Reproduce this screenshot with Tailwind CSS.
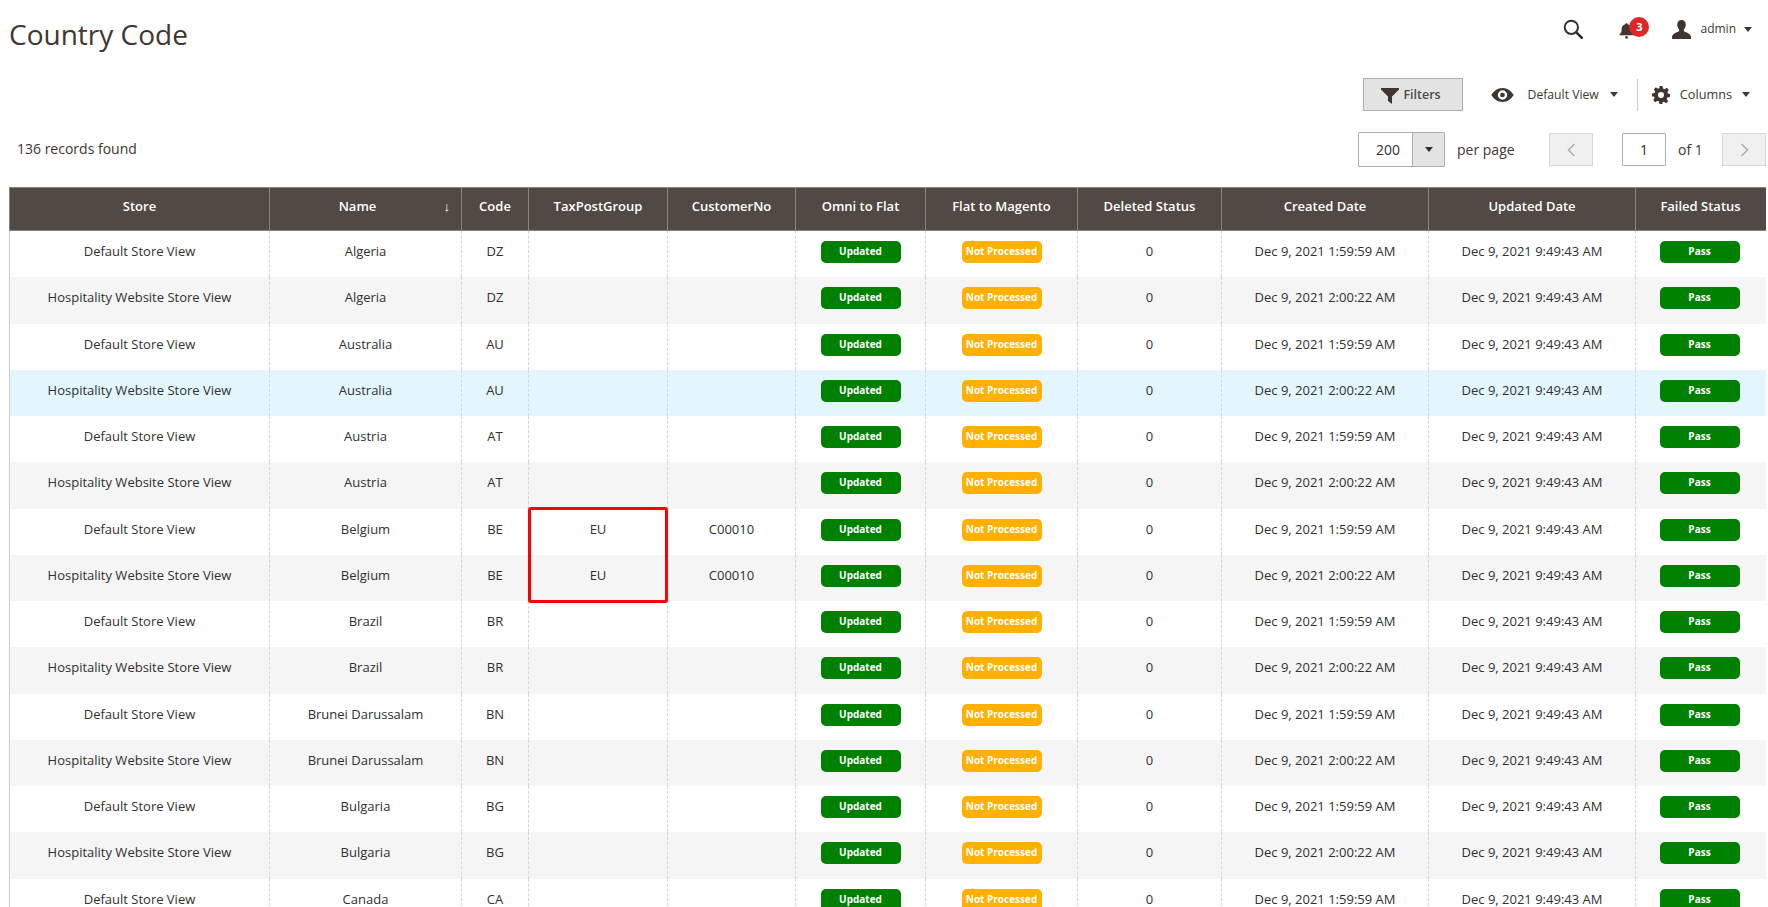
<!DOCTYPE html>
<html lang="en">
<head>
    <meta charset="UTF-8">
    <meta name="viewport" content="width=device-width, initial-scale=1.0">
    <title>Country Code</title>
    <script src="https://cdn.jsdelivr.net/npm/@tailwindcss/browser@4"></script>
</head>
<body class="bg-white font-['Open_Sans',sans-serif] text-[#303030]">
    <div class="h-[907px] overflow-hidden pl-[9px]">
        <!-- Page header -->
        <div class="flex items-start justify-between h-[78px]">
            <h1 class="text-[28px] leading-[36px] font-normal text-[#41362f] mt-[16px]">Country Code</h1>
            <div class="flex items-center h-[24px] mt-[17px] mr-[16px]">
                <svg class="w-[20px] h-[20px] text-[#303030]" viewBox="0 0 24 24" fill="none" stroke="currentColor">
                    <circle cx="10" cy="10" r="8" stroke-width="2.4"></circle>
                    <path d="M16 16L22.500 22.500" stroke-width="3" stroke-linecap="round"></path>
                </svg>
                <div class="relative ml-[35px] w-[24px] h-[24px]">
                    <svg class="absolute left-0 top-[5px] w-[17px] h-[17px] text-[#41362f]" viewBox="0 0 18 18" fill="currentColor">
                        <path d="M9 1.2c-.8 0-1.3.5-1.4 1.2C5 3.1 3.8 5.3 3.8 8c0 2.6-.8 3.9-2.3 5.3V14h15v-.7C15 11.900 14.200 10.600 14.200 8c0-2.700-1.200-4.900-3.800-5.600C10.300 1.700 9.800 1.200 9 1.200z"></path>
                        <circle cx="9" cy="16.300" r="1.400"></circle>
                    </svg>
                    <span class="absolute left-[11px] top-0 w-[20px] h-[20px] rounded-full bg-[#e22626] text-white text-[11px] leading-[19px] font-bold text-center">3</span>
                </div>
                <svg class="ml-[30px] w-[19px] h-[19px] text-[#41362f]" viewBox="0 0 20 20" fill="currentColor">
                    <path d="M10 0c-2.800 0-4.500 1.900-4.500 4.800 0 1.900.7 3.700 1.800 4.900.3.400.3 1.500.1 2C6.800 13.200 1 13.500 0 17.500V20h20v-2.500c-1-4-6.800-4.300-7.400-5.800-.2-.5-.2-1.600.1-2 1.100-1.200 1.800-3 1.800-4.900C14.500 1.900 12.800 0 10 0z"></path>
                </svg>
                <span class="ml-[9px] text-[12px] text-[#41362f]">admin</span>
                <span class="ml-[8px] w-0 h-0 border-x-[4px] border-x-transparent border-t-[5px] border-t-[#41362f]"></span>
            </div>
        </div>

        <!-- Toolbar -->
        <div class="flex items-center justify-end h-[33px] pr-[18px]">
            <button class="flex items-center justify-center w-[100px] h-[33px] pt-[2px] pr-[3px] bg-[#e3e3e3] border border-[#adadad] text-[12.5px] font-semibold text-[#514943]">
                <svg class="w-[18px] h-[16px] mr-[4px] text-[#41362f]" viewBox="0 0 18 16" fill="currentColor"><path d="M0 0h18v1.500L11 8.500V16l-4-3V8.500L0 1.500z"></path></svg>
                Filters
            </button>
            <svg class="ml-[28px] w-[23px] h-[14px] text-[#41362f]" viewBox="0 0 24 15" fill="currentColor">
                <path fill-rule="evenodd" d="M12 0C6.500 0 2.500 3.500 0 7.500 2.500 11.500 6.500 15 12 15s9.500-3.500 12-7.500C21.500 3.500 17.500 0 12 0zm0 2.500a5 5 0 1 1 0 10 5 5 0 0 1 0-10zm0 2.500a2.500 2.500 0 1 0 0 5 2.500 2.500 0 0 0 0-5z"></path>
            </svg>
            <span class="ml-[14px] pt-[2px] text-[12.2px] text-[#41362f]">Default View</span>
            <span class="ml-[11px] w-0 h-0 border-x-[4px] border-x-transparent border-t-[5px] border-t-[#41362f]"></span>
            <span class="ml-[19px] w-px h-[32px] bg-[#cccccc]"></span>
            <svg class="ml-[14px] w-[18px] h-[18px] text-[#41362f]" viewBox="0 0 24 24" fill="currentColor">
                <path fill-rule="evenodd" d="M10 0h4l.7 3.400 2 .8L19.600 2.300l2.800 2.800-1.900 2.900.8 2L24 10.700v3.900l-3.500.7-.8 2 1.900 2.900-2.800 2.800-2.900-1.900-2 .8L13.900 24H10l-.7-3.500-2-.8-2.900 1.900-2.800-2.800 1.900-2.900-.8-2L0 14v-4l3.500-.7.8-2L2.400 4.400l2.800-2.800 2.900 1.900 2-.8zM12 8a4 4 0 1 0 0 8 4 4 0 0 0 0-8z"></path>
            </svg>
            <span class="ml-[10px] pt-[1px] text-[12.7px] text-[#41362f]">Columns</span>
            <span class="ml-[10px] w-0 h-0 border-x-[4px] border-x-transparent border-t-[5px] border-t-[#41362f]"></span>
        </div>

        <!-- Records and pager -->
        <div class="flex items-center justify-between h-[35px] mt-[21px] pr-[2px]">
            <div class="pl-[8px] mb-[2px] text-[14px] text-[#41362f]">136 records found</div>
            <div class="flex items-center">
                <div class="flex w-[87px] h-[35px] border border-[#adadad] rounded-[1px]">
                    <span class="w-[53px] pl-[17px] text-[14px] leading-[33px]">200</span>
                    <span class="flex-1 flex items-center justify-center bg-[#e3e3e3] border-l border-[#adadad]">
                        <span class="w-0 h-0 border-x-[4px] border-x-transparent border-t-[5px] border-t-[#303030]"></span>
                    </span>
                </div>
                <span class="ml-[12px] w-[57px] whitespace-nowrap text-[14px] text-[#41362f]">per page</span>
                <button class="ml-[35px] flex items-center justify-center w-[44px] h-[33px] bg-[#f0f0f0] border border-[#d6d6d6]">
                    <svg class="w-[9px] h-[14px] text-[#adadad]" viewBox="0 0 9 14" fill="none" stroke="currentColor" stroke-width="1.500"><path d="M7.500 1L1.500 7l6 6"></path></svg>
                </button>
                <span class="ml-[29px] w-[44px] h-[33px] border border-[#adadad] rounded-[1px] text-[14px] leading-[31px] text-center">1</span>
                <span class="ml-[12px] w-[22px] whitespace-nowrap text-[14px] text-[#41362f]">of 1</span>
                <button class="ml-[22px] flex items-center justify-center w-[44px] h-[33px] bg-[#f0f0f0] border border-[#d6d6d6]">
                    <svg class="w-[9px] h-[14px] text-[#adadad]" viewBox="0 0 9 14" fill="none" stroke="currentColor" stroke-width="1.500"><path d="M1.500 1l6 6-6 6"></path></svg>
                </button>
            </div>
        </div>

        <!-- Grid -->
        <div class="relative mt-[20px] w-[1757px]">
            <table class="table-fixed border-separate border-spacing-0 w-[1757px] text-[13px]">
                <colgroup>
                    <col class="w-[260px]"><col class="w-[192px]"><col class="w-[67px]"><col class="w-[139px]"><col class="w-[128px]"><col class="w-[130px]"><col class="w-[152px]"><col class="w-[144px]"><col class="w-[207px]"><col class="w-[207px]"><col class="w-[131px]">
                </colgroup>
                <thead>
                    <tr class="bg-[#514943] text-white text-[13px] font-semibold">
                        <th class="h-[44px] p-0 pb-[4px] border-y border-l border-[#8a837f] font-semibold">Store</th>
                        <th class="relative h-[44px] p-0 pr-[16px] pb-[4px] border-y border-l border-[#8a837f] font-semibold">Name<span class="absolute right-[11px] top-[10px] text-[13px] leading-[16px] font-normal">↓</span></th>
                        <th class="h-[44px] p-0 pb-[4px] border-y border-l border-[#8a837f] font-semibold">Code</th>
                        <th class="h-[44px] p-0 pb-[4px] border-y border-l border-[#8a837f] font-semibold">TaxPostGroup</th>
                        <th class="h-[44px] p-0 pb-[4px] border-y border-l border-[#8a837f] font-semibold">CustomerNo</th>
                        <th class="h-[44px] p-0 pb-[4px] border-y border-l border-[#8a837f] font-semibold">Omni to Flat</th>
                        <th class="h-[44px] p-0 pb-[4px] border-y border-l border-[#8a837f] font-semibold">Flat to Magento</th>
                        <th class="h-[44px] p-0 pb-[4px] border-y border-l border-[#8a837f] font-semibold">Deleted Status</th>
                        <th class="h-[44px] p-0 pb-[4px] border-y border-l border-[#8a837f] font-semibold">Created Date</th>
                        <th class="h-[44px] p-0 pb-[4px] border-y border-l border-[#8a837f] font-semibold">Updated Date</th>
                        <th class="h-[44px] p-0 pr-[1px] pb-[4px] border-y border-l border-[#8a837f] font-semibold">Failed Status</th>
                    </tr>
                </thead>
                <tbody id="rows"></tbody>
            </table>
            <!-- Red annotation drawn over the grid -->
            <div class="absolute left-[519px] top-[320px] w-[140px] h-[96px] border-[3px] border-[#ff0000] rounded-[3px] pointer-events-none"></div>
        </div>
    </div>

    <script>
        // Rows of the grid: name, code, taxPostGroup, customerNo
        const countries = [
            ['Algeria', 'DZ', '', ''],
            ['Australia', 'AU', '', ''],
            ['Austria', 'AT', '', ''],
            ['Belgium', 'BE', 'EU', 'C00010'],
            ['Brazil', 'BR', '', ''],
            ['Brunei Darussalam', 'BN', '', ''],
            ['Bulgaria', 'BG', '', ''],
            ['Canada', 'CA', '', '']
        ];

        const firstCell = 'h-[46.28px] p-0 pt-[11px] align-top text-center leading-[18px] border-l border-solid border-[#cccccc]';
        const cell = 'h-[46.28px] p-0 pt-[11px] align-top text-center leading-[18px] border-l border-dashed border-[#d6d6d6]';
        const badgeCell = 'h-[46.28px] p-0 pt-[10px] align-top text-center border-l border-dashed border-[#d6d6d6]';
        const lastCell = 'h-[46.28px] p-0 pt-[10px] pr-[3px] align-top text-center border-l border-dashed border-[#d6d6d6]';
        const green = 'block mx-auto w-[80px] h-[22px] rounded-[5px] bg-[#008000] text-white text-[10px] leading-[20px] font-bold';
        const amber = 'block mx-auto w-[80px] h-[22px] rounded-[5px] bg-[#ffb000] text-white text-[10px] leading-[20px] font-bold';

        let html = '';
        let index = 0;
        countries.forEach(([name, code, tax, customer]) => {
            [['Default Store View', '1:59:59'], ['Hospitality Website Store View', '2:00:22']].forEach(([store, created]) => {
                if (index >= 15) return;
                let rowClass = index % 2 ? 'bg-[#f5f5f5]' : 'bg-white';
                if (index === 3) rowClass = 'bg-[#e3f6fe]';
                html += `<tr class="${rowClass}">
                    <td class="${firstCell}">${store}</td>
                    <td class="${cell}">${name}</td>
                    <td class="${cell}">${code}</td>
                    <td class="${cell}">${tax}</td>
                    <td class="${cell}">${customer}</td>
                    <td class="${badgeCell}"><span class="${green}">Updated</span></td>
                    <td class="${badgeCell}"><span class="${amber}">Not Processed</span></td>
                    <td class="${cell}">0</td>
                    <td class="${cell}">Dec 9, 2021 ${created} AM</td>
                    <td class="${cell}">Dec 9, 2021 9:49:43 AM</td>
                    <td class="${lastCell}"><span class="${green}">Pass</span></td>
                </tr>`;
                index++;
            });
        });
        document.getElementById('rows').innerHTML = html;
    </script>
</body>
</html>
